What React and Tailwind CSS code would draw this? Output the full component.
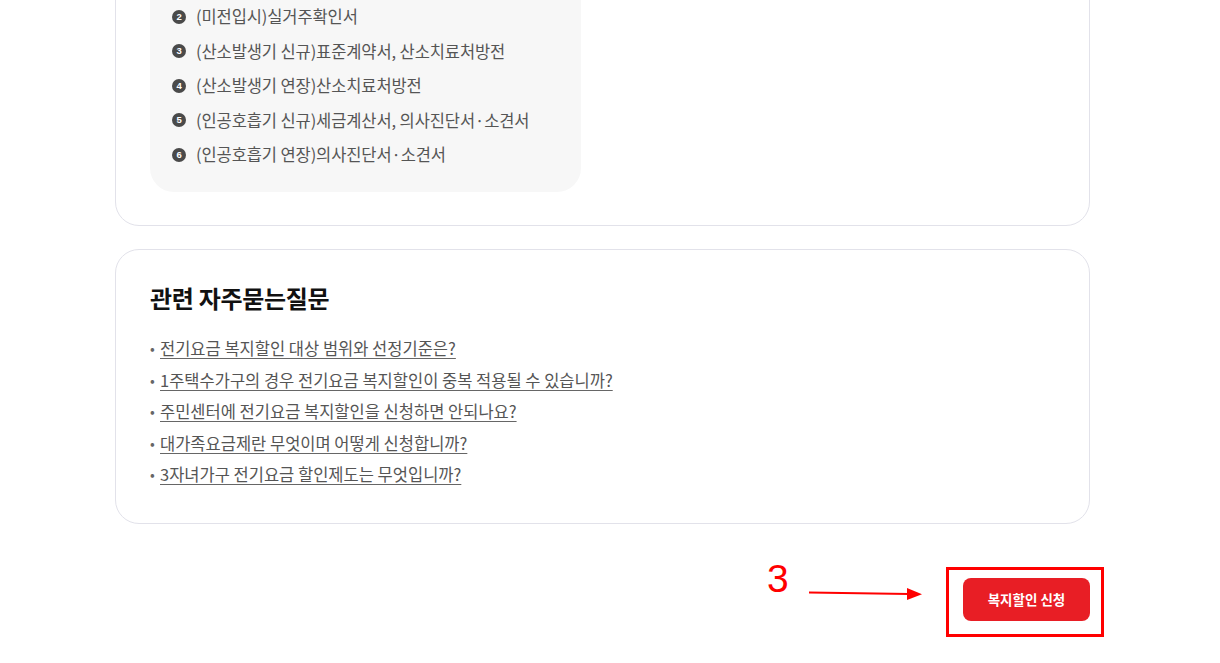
export default function App() {
  const docs = [
    { n: "2", t: "(미전입시)실거주확인서" },
    { n: "3", t: "(산소발생기 신규)표준계약서, 산소치료처방전" },
    { n: "4", t: "(산소발생기 연장)산소치료처방전" },
    { n: "5", t: "(인공호흡기 신규)세금계산서, 의사진단서·소견서" },
    { n: "6", t: "(인공호흡기 연장)의사진단서·소견서" },
  ];
  const faqs = [
    "전기요금 복지할인 대상 범위와 선정기준은?",
    "1주택수가구의 경우 전기요금 복지할인이 중복 적용될 수 있습니까?",
    "주민센터에 전기요금 복지할인을 신청하면 안되나요?",
    "대가족요금제란 무엇이며 어떻게 신청합니까?",
    "3자녀가구 전기요금 할인제도는 무엇입니까?",
  ];
  return (
    <div
      className="w-[1220px] h-[663px] overflow-hidden bg-white"
      style={{ fontFamily: '"Noto Sans CJK KR", "Noto Sans", sans-serif' }}
    >
      <div className="w-[975px] ml-[115px] mt-[-64px] flex flex-col">
        {/* Card 1 (scrolled) */}
        <div className="border border-[#e2e2ea] rounded-[24px] px-[34px] pt-[20px] pb-[33px]">
          <div className="w-[431px] bg-[#f7f7f7] rounded-[24px] pl-[22px] pt-[47.5px] pb-[25px] flex flex-col gap-[10.5px]">
            {docs.map((d) => (
              <div key={d.n} className="h-6 flex items-center gap-[10px] text-[16.5px] text-[#555] tracking-[-0.1px]">
                <span className="w-[14px] h-[14px] rounded-full bg-[#4a4a4a] text-white text-[9.5px] font-bold flex items-center justify-center leading-none shrink-0" style={{ fontFamily: '"Liberation Sans", sans-serif' }}>
                  {d.n}
                </span>
                <span>{d.t}</span>
              </div>
            ))}
          </div>
        </div>

        {/* Card 2 */}
        <div className="mt-[23px] border border-[#e2e2ea] rounded-[24px] px-[34px] pt-[33px] pb-[36px]">
          <h2 className="text-[24px] leading-[30px] font-bold text-[#111] tracking-[-0.3px]">관련 자주묻는질문</h2>
          <ul className="mt-[24px] flex flex-col gap-[7.5px]">
            {faqs.map((f) => (
              <li key={f} className="h-6 flex items-center text-[16.5px] text-[#555]">
                <span className="text-[#666] text-[14px] w-[10px] shrink-0">•</span>
                <a className="underline underline-offset-[3px] decoration-[#666]">{f}</a>
              </li>
            ))}
          </ul>
        </div>

        {/* Bottom row */}
        <div className="mt-[54px] flex justify-end">
          <div className="relative">
            <button className="w-[127px] h-[43px] rounded-[8px] bg-[#e81e25] text-white text-[13.5px] font-bold">
              복지할인 신청
            </button>
            <div className="absolute left-[-17px] right-[-14px] top-[-11px] bottom-[-16px] border-[3px] border-[#ff0000] pointer-events-none" />
            <span
              className="absolute left-[-196px] top-[-19px] text-[39px] leading-none text-[#ff0000]"
              style={{ fontFamily: '"Liberation Sans", sans-serif' }}
            >
              3
            </span>
            <svg className="absolute left-[-156px] top-[8px]" width="118" height="16" viewBox="0 0 118 16">
              <line x1="2" y1="6.5" x2="102" y2="8" stroke="#ff0000" strokeWidth="2.2" />
              <polygon points="100,2 115,8.3 100,14" fill="#ff0000" />
            </svg>
          </div>
        </div>
      </div>
    </div>
  );
}
